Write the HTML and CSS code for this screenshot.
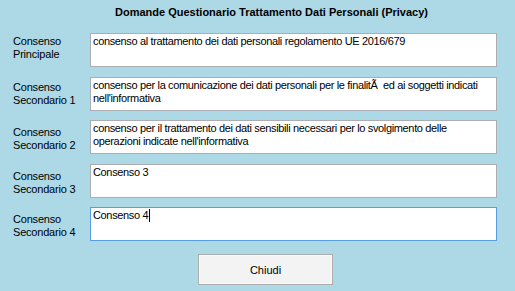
FILE: index.html
```html
<!DOCTYPE html>
<html lang="it">
<head>
<meta charset="utf-8">
<title>Domande Questionario</title>
<link rel="stylesheet" href="styles.css">
</head>
<body>
<div class="form">
  <div class="title">Domande Questionario Trattamento Dati Personali (Privacy)</div>
  <div class="rows">
    <div class="row">
      <div class="label l1">Consenso<br>Principale</div>
      <div class="box">consenso al trattamento dei dati personali regolamento UE 2016/679</div>
    </div>
    <div class="row">
      <div class="label l2">Consenso<br>Secondario 1</div>
      <div class="box">consenso per la comunicazione dei dati personali per le finalitÃ&nbsp; ed ai soggetti indicati nell'informativa</div>
    </div>
    <div class="row">
      <div class="label l3">Consenso<br>Secondario 2</div>
      <div class="box">consenso per il trattamento dei dati sensibili necessari per lo svolgimento delle operazioni indicate nell'informativa</div>
    </div>
    <div class="row">
      <div class="label l3">Consenso<br>Secondario 3</div>
      <div class="box">Consenso 3</div>
    </div>
    <div class="row">
      <div class="label l3">Consenso<br>Secondario 4</div>
      <div class="box focused">Consenso 4<span class="caret"></span></div>
    </div>
  </div>
  <div class="actions">
    <button class="btn" type="button">Chiudi</button>
  </div>
</div>
</body>
</html>
```

FILE: styles.css
```css
html, body {
  margin: 0;
  padding: 0;
}
body {
  background: #add8e6;
  font-family: "Liberation Sans", Arial, sans-serif;
  font-size: 11px;
  line-height: 13px;
  color: #000;
  width: 515px;
  height: 291px;
  overflow: hidden;
}
.form {
  display: flex;
  flex-direction: column;
  padding-top: 6px;
}
.title {
  font-weight: bold;
  padding-left: 115px;
  height: 27px;
}
.rows {
  display: flex;
  flex-direction: column;
  gap: 9.5px;
}
.row {
  display: grid;
  grid-template-columns: 77px 407px;
  padding-left: 13px;
}
.label {
  color: #000;
  letter-spacing: -0.2px;
}
.l1 { padding-top: 2px; }
.l2 { padding-top: 4px; }
.l3 { padding-top: 6px; }
.box {
  box-sizing: border-box;
  height: 34px;
  background: #fff;
  border: 1px solid #abadb3;
  padding: 1px 2px;
  overflow: hidden;
  letter-spacing: -0.35px;
}
.box.focused {
  border-color: #569de5;
}
.caret {
  display: inline-block;
  width: 1px;
  height: 13px;
  background: #000;
  vertical-align: top;
  margin-left: 1px;
}
.actions {
  display: flex;
  padding-top: 13px;
  padding-left: 198px;
}
.btn {
  box-sizing: border-box;
  width: 135px;
  height: 31px;
  background: #f3f3f3;
  border: 1px solid #adadad;
  box-shadow: inset 0 0 0 1px #f9f9f9;
  font-family: "Liberation Sans", Arial, sans-serif;
  font-size: 11px;
  color: #000;
  padding: 0;
}
```
